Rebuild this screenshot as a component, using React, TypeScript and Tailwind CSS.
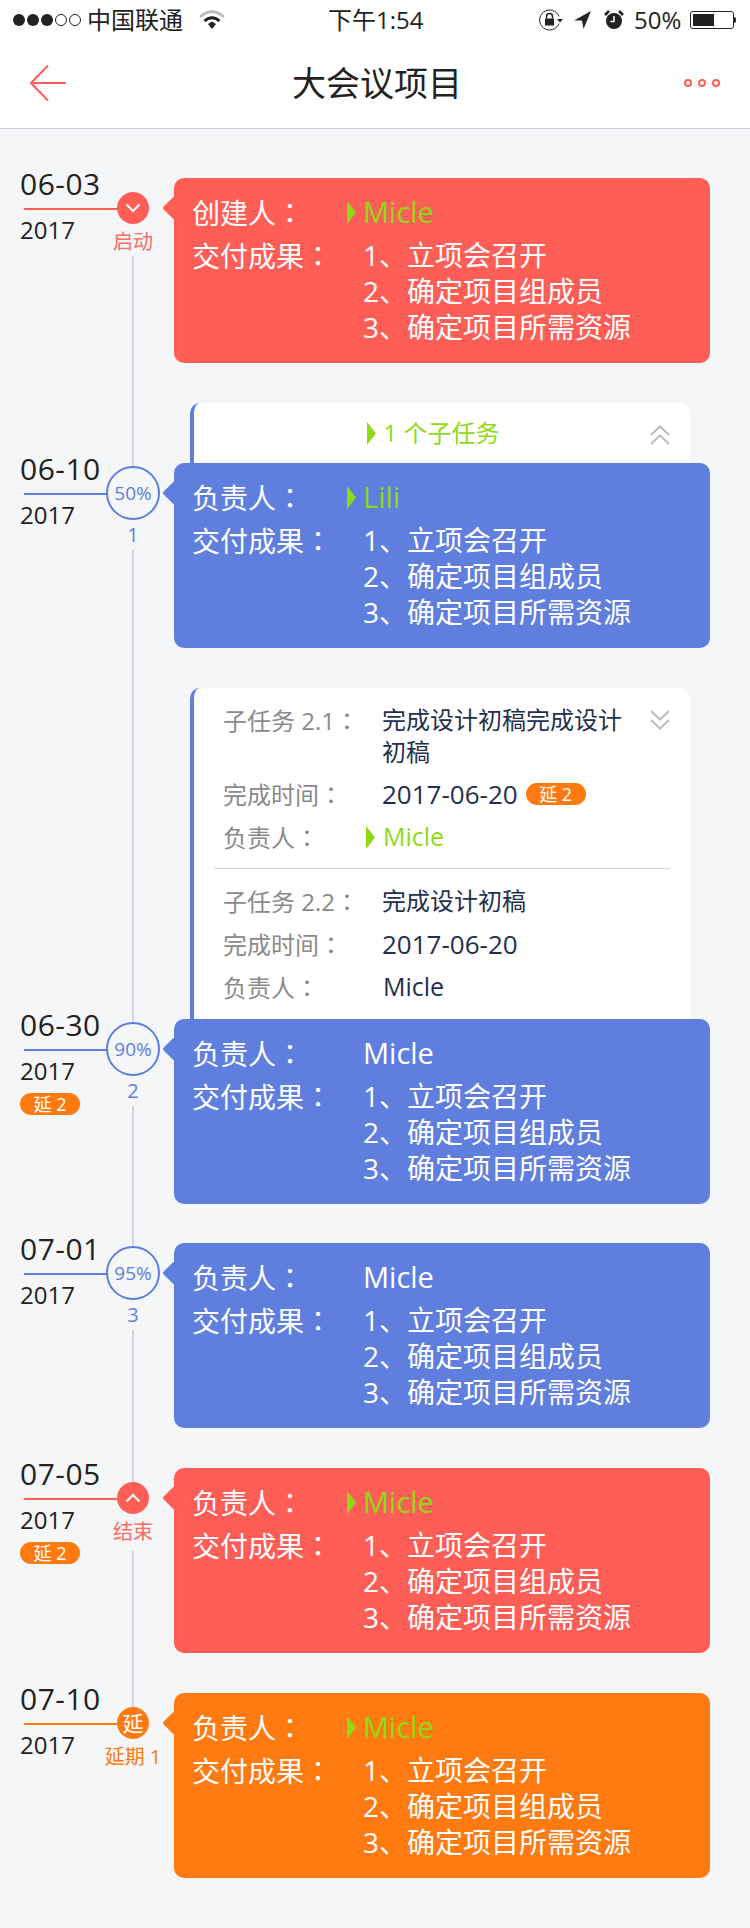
const FONT = "font-['Open_Sans','Noto_Sans_CJK_SC',sans-serif]";

type Tone = "red" | "blue" | "orange";

const cardBg: Record<Tone, string> = {
  red: "bg-[#ff5e57]",
  blue: "bg-[#607edd]",
  orange: "bg-[#ff7a10]",
};
const ruleBg = cardBg;
const labelText: Record<Tone, string> = {
  red: "text-[#ff6a63]",
  blue: "text-[#607edd]",
  orange: "text-[#ff7a10]",
};

function Colon() {
  return <span className="font-['Noto_Sans_CJK_TC',sans-serif]">：</span>;
}

function Marker({ className = "" }: { className?: string }) {
  return (
    <svg width="9" height="23" viewBox="0 0 9 23" className={className}>
      <polygon points="0,0 9,11.5 0,23" fill="#8fd916" />
    </svg>
  );
}

function Chevrons({ up }: { up?: boolean }) {
  return (
    <svg width="20" height="20" viewBox="0 0 20 20" fill="none" stroke="#bdbdbd" strokeWidth="2" className={up ? "" : "rotate-180"}>
      <polyline points="1,10 10,1.5 19,10" />
      <polyline points="1,19 10,10.5 19,19" />
    </svg>
  );
}

function DelayBadge({ className = "" }: { className?: string }) {
  return (
    <div className={`flex h-[22px] w-[60px] items-center justify-center rounded-full bg-[#ff7a10] text-[18px] leading-none text-white ${className}`}>
      延 2
    </div>
  );
}

function Card({ tone, title, name, green }: { tone: Tone; title: string; name: string; green?: boolean }) {
  return (
    <div className={`relative h-[185px] w-[536px] rounded-[10px] pl-[18px] pt-[16px] text-[28px] text-white ${cardBg[tone]}`}>
      <div className={`absolute left-[-8px] top-[21px] h-[18px] w-[18px] rotate-45 rounded-[2px] ${cardBg[tone]}`} />
      <div className="relative flex h-[36px] items-center leading-[36px]">
        <div className="w-[155px] whitespace-nowrap">
          {title}
          <Colon />
        </div>
        <div className="w-[16px]">{green && <Marker />}</div>
        <div className={`text-[29px] ${green ? "text-[#8fd916]" : ""}`}>{name}</div>
      </div>
      <div className="relative mt-[7px] flex leading-[36px]">
        <div className="w-[171px] whitespace-nowrap">
          交付成果
          <Colon />
        </div>
        <div>
          <div>1、立项会召开</div>
          <div>2、确定项目组成员</div>
          <div>3、确定项目所需资源</div>
        </div>
      </div>
    </div>
  );
}

type NodeKind =
  | { type: "chevron"; up?: boolean; label: string; labelH: number }
  | { type: "percent"; value: string; label: string }
  | { type: "delay"; label: string; labelH: number };

function Node({ tone, node }: { tone: Tone; node: NodeKind }) {
  if (node.type === "percent") {
    return (
      <div className="relative z-10 flex w-[80px] flex-col items-center pt-[3px]">
        <div className="flex h-[54px] w-[54px] items-center justify-center rounded-full border-2 border-[#607edd] bg-[#f5f6f8] text-[19px] text-[#607edd]">
          {node.value}
        </div>
        <div className="flex h-[30px] w-[30px] items-center justify-center bg-[#f5f6f8] text-[20px] text-[#607edd]">{node.label}</div>
      </div>
    );
  }
  return (
    <div className="relative z-10 flex w-[80px] flex-col items-center pt-[14px]">
      <div className={`flex h-[32px] w-[32px] items-center justify-center rounded-full text-[21px] leading-none text-white ${cardBg[tone]}`}>
        {node.type === "chevron" ? (
          <svg width="16" height="10" viewBox="0 0 16 10" fill="none" stroke="#fff" strokeWidth="2" className={node.up ? "rotate-180" : ""}>
            <polyline points="1.5,1.5 8,8 14.5,1.5" />
          </svg>
        ) : (
          "延"
        )}
      </div>
      <div
        className={`flex items-start justify-center whitespace-nowrap bg-[#f5f6f8] pt-[5px] text-[20px] leading-[26px] ${labelText[tone]}`}
        style={{ height: node.labelH }}
      >
        {node.label}
      </div>
    </div>
  );
}

function Row({
  tone,
  date,
  delay,
  node,
  title = "负责人",
  name,
  green,
}: {
  tone: Tone;
  date: string;
  delay?: boolean;
  node: NodeKind;
  title?: string;
  name: string;
  green?: boolean;
}) {
  return (
    <div className="flex">
      <div className="mt-[-9px] ml-[20px] w-[73px] text-[#222]">
        <div className="h-[30px] whitespace-nowrap text-[30px] font-medium leading-[30px] tracking-[0.5px]">{date}</div>
        <div className={`ml-[4px] mt-[9px] h-[2px] w-[96px] ${ruleBg[tone]}`} />
        <div className="mt-[5px] h-[30px] text-[24px] leading-[30px]">2017</div>
        {delay && <DelayBadge className="mt-[7px]" />}
      </div>
      <Node tone={tone} node={node} />
      <div className="ml-px">
        <Card tone={tone} title={title} name={name} green={green} />
      </div>
    </div>
  );
}

function SubTask({
  no,
  title,
  name,
  green,
  delay,
}: {
  no: string;
  title: string;
  name: string;
  green?: boolean;
  delay?: boolean;
}) {
  return (
    <div className="text-[24px]">
      <div className="flex leading-[32px]">
        <div className="w-[168px] shrink-0 pl-[9px] text-[#8a8a8a] whitespace-nowrap">
          子任务 {no}
          <Colon />
        </div>
        <div className="w-[245px] text-[#22304e]">{title}</div>
      </div>
      <div className="mt-[10px] flex h-[32px] items-center">
        <div className="w-[168px] shrink-0 pl-[9px] text-[#8a8a8a]">
          完成时间
          <Colon />
        </div>
        <div className="text-[26px] text-[#22304e]">2017-06-20</div>
        {delay && <DelayBadge className="ml-[8px]" />}
      </div>
      <div className="mt-[11px] flex h-[32px] items-center">
        <div className="w-[152px] shrink-0 pl-[9px] text-[#8a8a8a]">
          负责人
          <Colon />
        </div>
        <div className="w-[17px]">{green && <Marker />}</div>
        <div className={`text-[25px] ${green ? "text-[#8fd916]" : "text-[#22304e]"}`}>{name}</div>
      </div>
    </div>
  );
}

function StatusBar() {
  return (
    <div className="flex h-[40px] items-center text-[24px] leading-none text-[#222]">
      <div className="ml-[13px] flex gap-[2px]">
        {[0, 1, 2].map((i) => (
          <span key={i} className="h-[12px] w-[12px] rounded-full bg-[#222]" />
        ))}
        {[0, 1].map((i) => (
          <span key={i} className="h-[12px] w-[12px] rounded-full border border-[#222]" />
        ))}
      </div>
      <span className="ml-[6px] w-[112px] whitespace-nowrap">中国联通</span>
      <svg width="26" height="20" viewBox="0 0 26 20" fill="none">
        <path d="M1 7 C8 0 18 0 25 7" stroke="#bdbdbd" strokeWidth="3" />
        <path d="M5.5 11 C10 6.5 16 6.5 20.5 11" stroke="#222" strokeWidth="3" />
        <polygon points="9,14 13,11.5 17,14 13,19" fill="#222" />
      </svg>
      <span className="ml-[103px] w-[210px] whitespace-nowrap">下午1:54</span>
      <svg width="25" height="20" viewBox="0 0 25 20" fill="none" className="h-[24px] w-[25px]">
        <path d="M21 6.5 A10 10 0 1 0 21 13.5" stroke="#222" strokeWidth="1" />
        <polygon points="19,9 25,9 22,12.5" fill="#222" />
        <rect x="7" y="8.5" width="9" height="7" fill="#222" />
        <path d="M8.5 8.5 V6.5 a3 3 0 0 1 6 0 V8.5" stroke="#222" strokeWidth="1.5" />
      </svg>
      <svg width="17" height="18" viewBox="0 0 17 18" className="ml-[11px]">
        <polygon points="17,0 0,9.5 8,9.5 9.5,18" fill="#222" />
      </svg>
      <svg width="20" height="20" viewBox="0 0 20 20" className="ml-[13px]">
        <circle cx="10" cy="11" r="8" fill="#222" />
        <path d="M1 5 L5 1 M19 5 L15 1" stroke="#222" strokeWidth="2.5" />
        <path d="M10 6 V11.5 H6.5" stroke="#fff" strokeWidth="1.5" fill="none" />
      </svg>
      <span className="ml-[10px] w-[56px] whitespace-nowrap">50%</span>
      <div className="flex items-center">
        <div className="h-[18px] w-[44px] rounded-[3px] border border-[#222] p-[2px]">
          <div className="h-full w-[21px] bg-[#222]" />
        </div>
        <div className="h-[6px] w-[2px] rounded-r-full bg-[#222]" />
      </div>
    </div>
  );
}

function NavBar() {
  return (
    <div className="flex h-[89px] items-center justify-between border-b border-[#cfd0d8] pb-[2px] pl-[30px] pr-[30px]">
      <svg width="36" height="36" viewBox="0 0 36 36" fill="none" stroke="#ff5e57" strokeWidth="2">
        <polyline points="18,0.5 1,18 18,35.5" />
        <line x1="1" y1="18" x2="36" y2="18" />
      </svg>
      <div className="ml-[4px] text-[34px] leading-none text-[#222]">大会议项目</div>
      <div className="flex gap-[6px]">
        {[0, 1, 2].map((i) => (
          <span key={i} className="h-[8px] w-[8px] rounded-full border-2 border-[#ff5e57]" />
        ))}
      </div>
    </div>
  );
}

export default function App() {
  return (
    <div className={`h-[1928px] w-[750px] overflow-hidden bg-[#f5f6f8] ${FONT}`}>
      <div className="bg-white">
        <StatusBar />
        <NavBar />
      </div>
      <div className="relative pt-[49px]">
        <div className="absolute left-[132px] top-[100px] h-[1480px] w-[2px] bg-[#d3d6dc]" />
        <Row
          tone="red"
          date="06-03"
          node={{ type: "chevron", label: "启动", labelH: 32 }}
          title="创建人"
          name="Micle"
          green
        />

        <div className="relative ml-[190px] mt-[40px] flex h-[60px] w-[500px] items-center justify-center rounded-t-[10px] border-l-4 border-[#607edd] bg-white pr-[18px] text-[24px] text-[#8fd916]">
          <Marker className="mr-[8px]" />
          <span>1 个子任务</span>
          <div className="absolute right-[20px] top-[22px]">
            <Chevrons up />
          </div>
        </div>
        <Row tone="blue" date="06-10" node={{ type: "percent", value: "50%", label: "1" }} name="Lili" green />

        <div className="relative ml-[190px] mt-[40px] h-[331px] w-[500px] rounded-t-[10px] border-l-4 border-[#607edd] bg-white pl-[20px] pr-[20px] pt-[16px]">
          <div className="absolute right-[20px] top-[22px]">
            <Chevrons />
          </div>
          <SubTask no="2.1" title="完成设计初稿完成设计初稿" name="Micle" green delay />
          <div className="mb-[16px] mt-[15px] h-px w-[456px] bg-[#d8d8d8]" />
          <SubTask no="2.2" title="完成设计初稿" name="Micle" />
        </div>
        <Row tone="blue" date="06-30" delay node={{ type: "percent", value: "90%", label: "2" }} name="Micle" />

        <div className="h-[39px]" />
        <Row tone="blue" date="07-01" node={{ type: "percent", value: "95%", label: "3" }} name="Micle" />

        <div className="h-[40px]" />
        <Row
          tone="red"
          date="07-05"
          delay
          node={{ type: "chevron", up: true, label: "结束", labelH: 37 }}
          name="Micle"
          green
        />

        <div className="h-[40px]" />
        <Row
          tone="orange"
          date="07-10"
          node={{ type: "delay", label: "延期 1", labelH: 34 }}
          name="Micle"
          green
        />
      </div>
    </div>
  );
}
